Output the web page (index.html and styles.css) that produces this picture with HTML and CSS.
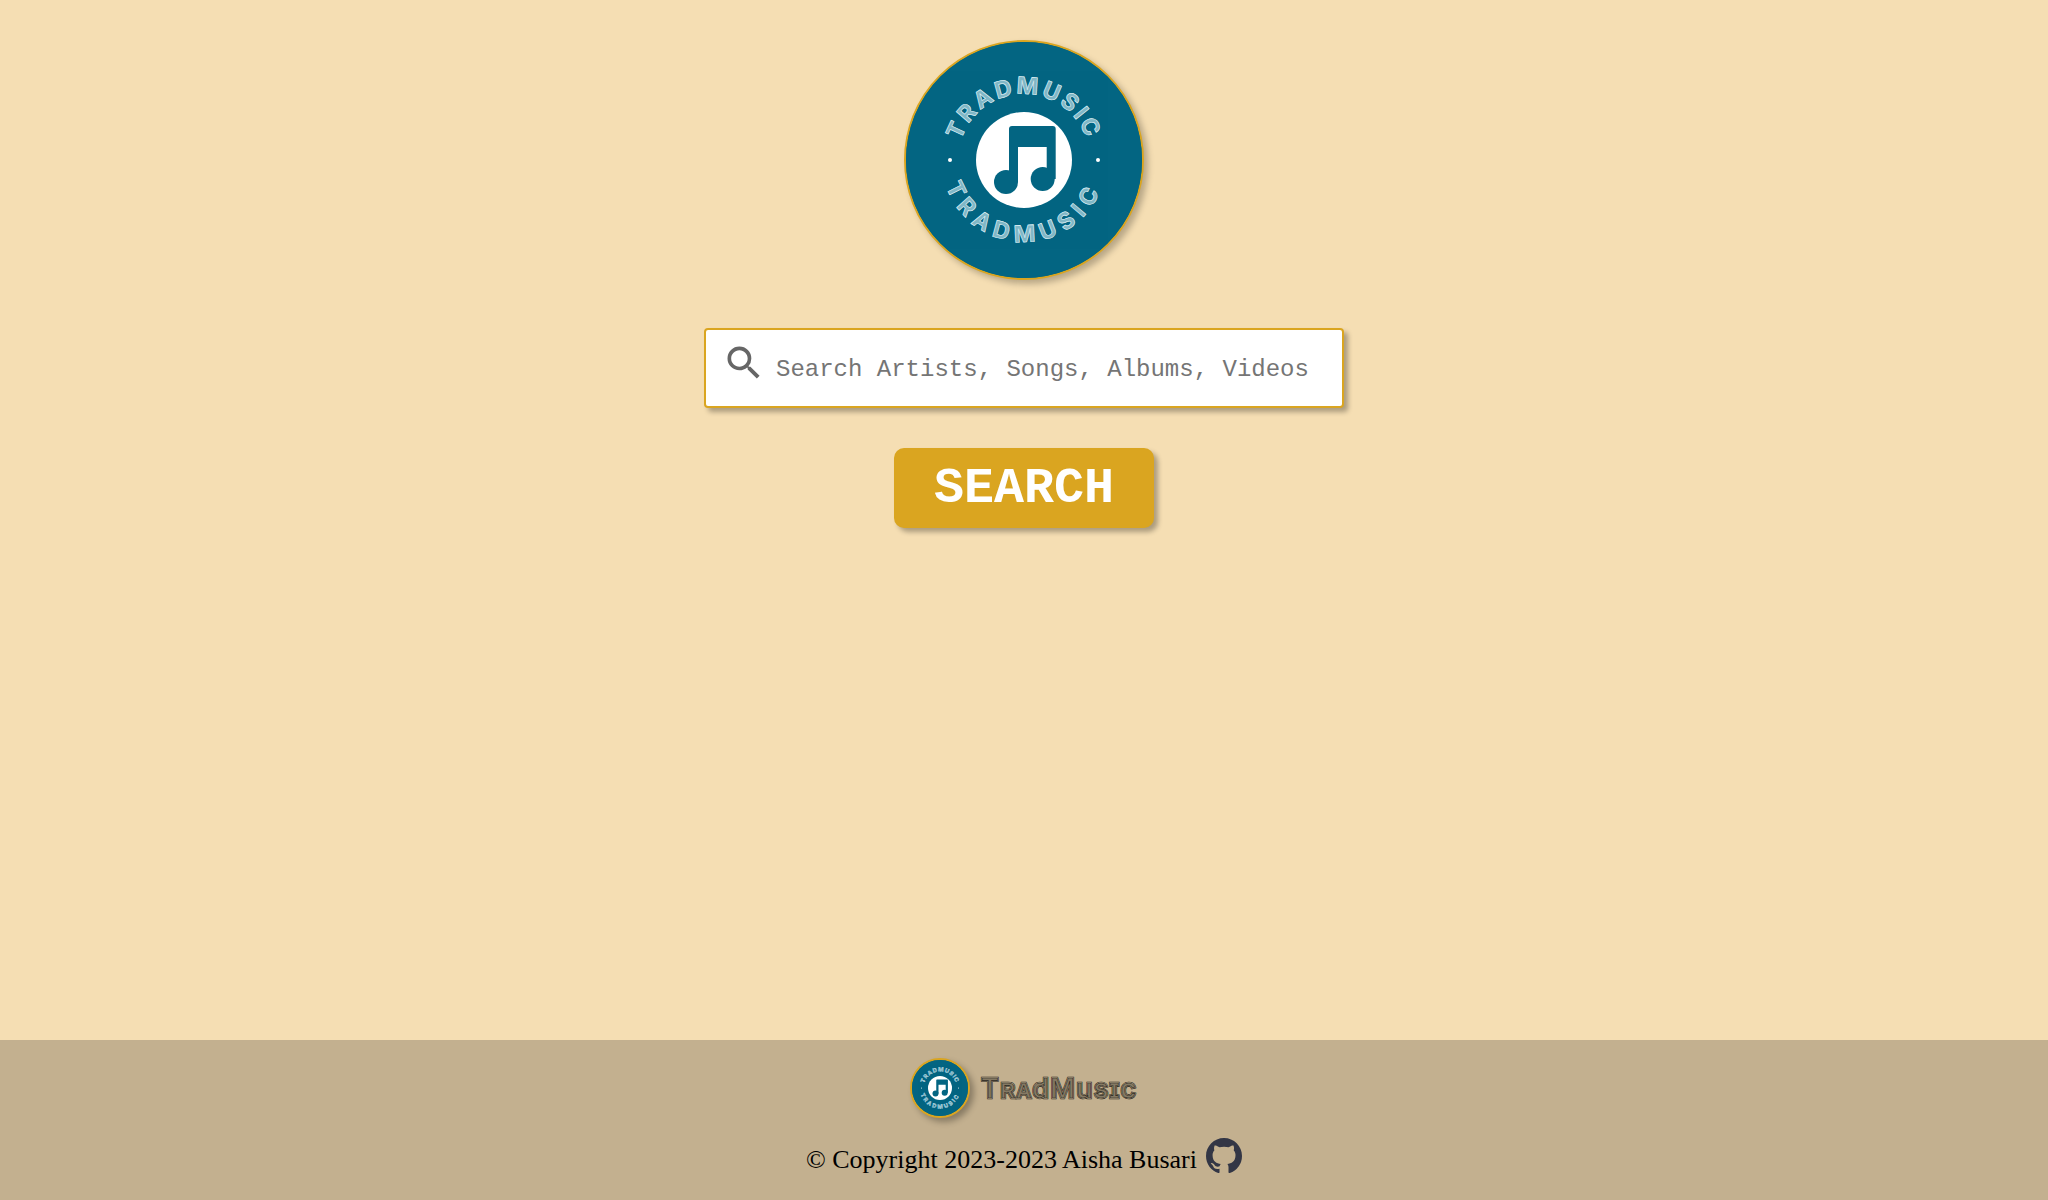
FILE: index.html
```html
<!DOCTYPE html>
<html>
<head>
    <title>TradMusic</title>
    <link rel="stylesheet" href="styles.css">
</head>
<body>
    <main class="home">
        <svg class="logo logo-large" viewBox="2 2 236 236">
            <defs>
                <path id="arcTop" d="M54 120A66 66 0 0 1 186 120"/>
                <path id="arcBottom" d="M38 120A82 82 0 0 0 202 120"/>
                <g id="ringText">
                    <text class="ring-text ring-text-top"><textPath href="#arcTop" startOffset="50%">TRADMUSIC</textPath></text>
                    <text class="ring-text ring-text-bottom"><textPath href="#arcBottom" startOffset="50%">TRADMUSIC</textPath></text>
                </g>
                <symbol id="mark" viewBox="0 0 240 240">
                    <rect width="240" height="240" fill="#036582"/>
                    <use href="#ringText" class="ring-outer"/>
                    <use href="#ringText" class="ring-gap"/>
                    <use href="#ringText" class="ring-inner"/>
                    <circle cx="46" cy="120" r="2" fill="#fff"/>
                    <circle cx="194" cy="120" r="2" fill="#fff"/>
                    <circle cx="120" cy="120" r="48" fill="#fff"/>
                    <path fill="#036582" d="M105 89q0-3 3-3h40.700q3 0 3 3v50h-9v-32h-28.700v35h-9z"/>
                    <circle cx="102" cy="142" r="12" fill="#036582"/>
                    <circle cx="138.700" cy="139" r="12" fill="#036582"/>
                </symbol>
            </defs>
            <use href="#mark" width="240" height="240"/>
        </svg>

        <form class="search-form">
            <div class="search-box">
                <svg class="search-icon" viewBox="0 0 24 24">
                    <path d="M15.500 14h-.79l-.28-.27A6.470 6.470 0 0 0 16 9.500 6.500 6.500 0 1 0 9.500 16c1.610 0 3.090-.59 4.230-1.570l.27.28v.79l5 4.990L20.490 19l-4.990-5zm-6 0C7.010 14 5 11.990 5 9.500S7.010 5 9.500 5 14 7.010 14 9.500 11.990 14 9.500 14z"/>
                </svg>
                <input class="search-input" type="text" placeholder="Search Artists, Songs, Albums, Videos">
            </div>
            <button class="search-button" type="submit">SEARCH</button>
        </form>
    </main>

    <footer class="site-footer">
        <div class="footer-brand">
            <svg class="logo logo-small" viewBox="8 8 224 224"><use href="#mark" width="240" height="240"/></svg>
            <svg class="wordmark" viewBox="0 0 158 30">
                <defs>
                    <text id="wordText" class="wordmark-text" x="1" y="25" textLength="155">TradMusic</text>
                </defs>
                <use href="#wordText" class="word-outer"/>
                <use href="#wordText" class="word-gap"/>
                <use href="#wordText" class="word-inner"/>
            </svg>
        </div>
        <div class="copyright">
            <span class="copyright-text">&copy; Copyright 2023-2023 Aisha Busari</span>
            <svg class="github-icon" viewBox="0 0 16 16">
                <path d="M8 0C3.580 0 0 3.580 0 8c0 3.540 2.290 6.530 5.470 7.590.4.070.55-.17.55-.38 0-.19-.01-.82-.01-1.490-2.010.37-2.530-.49-2.690-.94-.09-.23-.48-.94-.82-1.130-.28-.15-.68-.52-.01-.53.63-.01 1.080.58 1.230.82.72 1.210 1.870.87 2.330.66.070-.52.28-.87.51-1.070-1.780-.2-3.640-.89-3.640-3.950 0-.87.31-1.590.82-2.150-.08-.2-.36-1.020.08-2.120 0 0 .67-.21 2.200.82.64-.18 1.320-.27 2-.27.68 0 1.360.09 2 .27 1.530-1.040 2.200-.82 2.200-.82.44 1.100.16 1.920.08 2.120.51.56.82 1.270.82 2.150 0 3.070-1.870 3.750-3.650 3.950.29.25.54.73.54 1.480 0 1.070-.01 1.930-.01 2.200 0 .21.15.46.55.38A8.013 8.013 0 0 0 16 8c0-4.420-3.580-8-8-8z"/>
            </svg>
        </div>
    </footer>
</body>
</html>
```

FILE: styles.css
```css
body {
    margin: 0;
    min-height: 1200px;
    display: flex;
    flex-direction: column;
    background-color: #f5deb3;
    font-family: "Liberation Serif", serif;
}

.home {
    flex: 1;
    display: flex;
    flex-direction: column;
    align-items: center;
    padding-top: 40px;
}

.logo {
    display: block;
    box-sizing: border-box;
    border: 2px solid #daa520;
    border-radius: 50%;
    background-color: #036582;
}

.logo-large {
    width: 240px;
    height: 240px;
    box-shadow: 4px 4px 6px rgba(0, 0, 0, 0.25);
}

.logo-small {
    width: 60px;
    height: 60px;
    box-shadow: 4px 4px 6px rgba(0, 0, 0, 0.3);
}

.ring-text {
    font-family: "Inter", sans-serif;
    font-weight: 700;
    font-size: 23px;
    text-anchor: middle;
}

.ring-text-top {
    letter-spacing: 3px;
}

.ring-text-bottom {
    letter-spacing: 7px;
}

.ring-outer {
    fill: #b8dbe4;
    stroke: #b8dbe4;
    stroke-width: 0.800px;
}

.ring-gap {
    fill: #036582;
    stroke: none;
    opacity: 0.3;
}

.ring-inner {
    fill: none;
    stroke: #e4f3f6;
    stroke-width: 0.400px;
}

.search-form {
    display: flex;
    flex-direction: column;
    align-items: center;
    gap: 40px;
    margin-top: 48px;
}

.search-box {
    position: relative;
}

.search-icon {
    position: absolute;
    left: 18px;
    top: 13px;
    width: 44px;
    height: 44px;
    fill: #666;
}

.search-input {
    display: block;
    box-sizing: border-box;
    width: 640px;
    height: 80px;
    padding: 2px 20px 0 70px;
    border: 2px solid #daa520;
    border-radius: 4px;
    background-color: #fff;
    box-shadow: 4px 4px 5px rgba(0, 0, 0, 0.3);
    font-family: "Liberation Mono", monospace;
    font-size: 24px;
    outline: none;
}

.search-input::placeholder {
    color: #757575;
    opacity: 1;
}

.search-button {
    width: 260px;
    height: 80px;
    border: none;
    border-radius: 10px;
    background-color: #daa520;
    box-shadow: 4px 4px 5px rgba(0, 0, 0, 0.3);
    color: #fff;
    font-family: "Liberation Mono", monospace;
    font-size: 50px;
    font-weight: 700;
    cursor: pointer;
}

.site-footer {
    height: 160px;
    box-sizing: border-box;
    padding-top: 18px;
    display: flex;
    flex-direction: column;
    align-items: center;
    background-color: #c3b08f;
}

.footer-brand {
    display: flex;
    align-items: center;
    gap: 10px;
}

.wordmark {
    width: 158px;
    height: 30px;
}

.wordmark-text {
    font-family: "Inter", sans-serif;
    font-variant: small-caps;
    font-weight: 500;
    font-size: 27px;
}

.word-outer {
    fill: #1f1e1a;
    stroke: #1f1e1a;
    stroke-width: 2.400px;
}

.word-gap {
    fill: #c3b08f;
    stroke: #c3b08f;
    stroke-width: 1.300px;
}

.word-inner {
    fill: rgba(31, 30, 26, 0.4);
    stroke: #1f1e1a;
    stroke-width: 0.600px;
}

.copyright {
    display: flex;
    align-items: flex-end;
    gap: 9px;
    margin-top: 20px;
    font-size: 26px;
    color: #000;
}

.copyright-text {
    margin-bottom: -1px;
}

.github-icon {
    width: 36px;
    height: 36px;
    fill: #333645;
}
```
